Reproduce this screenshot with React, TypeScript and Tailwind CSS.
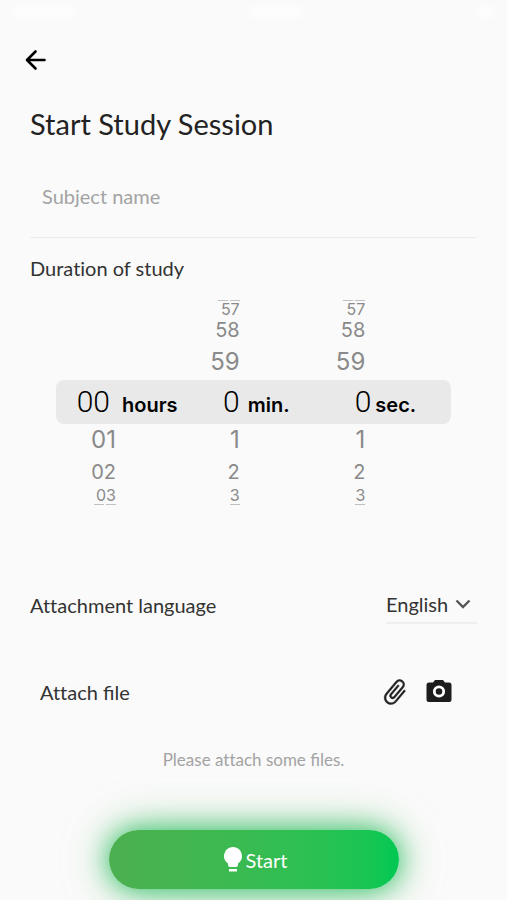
import { useState } from "react";

const pad = (n: number) => String(n).padStart(2, "0");

type Wheel = {
  unit: string;
  size: number;
  padded: boolean;
  wraps: boolean;
  rowWidth: string;
  valueWidth: string;
  labelGap: string;
};

const wheels: Wheel[] = [
  { unit: "hours", size: 24, padded: true, wraps: false, rowWidth: "w-15", valueWidth: "w-13.5", labelGap: "gap-3" },
  { unit: "min.", size: 60, padded: false, wraps: true, rowWidth: "w-13", valueWidth: "w-13", labelGap: "gap-2" },
  { unit: "sec.", size: 60, padded: false, wraps: true, rowWidth: "w-11.5", valueWidth: "w-13", labelGap: "gap-1" },
];

const rows = [
  { offset: -4, style: "h-1 items-center" },
  { offset: -3, style: "h-3.5 items-center text-base leading-3.5 text-[#8a8a8a]" },
  { offset: -2, style: "h-7 items-center text-xl leading-6 text-[#8a8a8a]" },
  { offset: -1, style: "h-9 items-center text-2xl leading-8 text-[#8a8a8a]" },
  { offset: 0, style: "h-11 items-center rounded-lg bg-[#e9e9e9] text-black" },
  { offset: 1, style: "h-8 items-center text-2xl leading-8 text-[#8a8a8a]" },
  { offset: 2, style: "h-8 items-center text-xl leading-6 text-[#8a8a8a]" },
  { offset: 3, style: "h-3.5 items-center text-base leading-3.5 text-[#8a8a8a]" },
  { offset: 4, style: "h-1 items-center" },
];

function DurationPicker() {
  const [values, setValues] = useState([0, 0, 0]);
  const select = (index: number, value: number) =>
    setValues(values.map((v, i) => (i === index ? value : v)));

  return (
    <div
      role="group"
      aria-labelledby="duration"
      className="mx-[26px] mt-4.5 font-['Inter','Liberation_Sans',sans-serif]"
    >
      {rows.map(({ offset, style }) => (
        <div key={offset} className={`grid grid-cols-3 ${style}`}>
          {wheels.map((w, i) => {
            const raw = values[i] + offset;
            const hidden = !w.wraps && (raw < 0 || raw >= w.size);
            if (hidden) return <span key={w.unit} />;
            const value = (raw + w.size) % w.size;
            const text = w.padded ? pad(value) : String(value);
            // The outermost value has turned edge-on, so only a thin line of it shows.
            if (Math.abs(offset) === 4)
              return (
                <span key={w.unit} aria-hidden="true" className={`flex justify-end gap-0.5 ${w.rowWidth}`}>
                  {text.split("").map((_, n) => (
                    <span key={n} className="h-px w-2.5 bg-[#c0c0c0]" />
                  ))}
                </span>
              );
            if (offset === 0)
              return (
                <div key={w.unit} className={`flex items-baseline ${w.labelGap}`}>
                  <output
                    className={`text-right font-['Roboto','Liberation_Sans',sans-serif] text-[30px] leading-9 font-light ${w.valueWidth}`}
                  >
                    {text}
                  </output>
                  <span className="text-xl font-semibold">{w.unit}</span>
                </div>
              );
            return (
              <button
                key={w.unit}
                type="button"
                onClick={() => select(i, value)}
                className={`text-right ${w.rowWidth}`}
              >
                {text}
              </button>
            );
          })}
        </div>
      ))}
    </div>
  );
}

export default function App() {
  return (
    <main className="flex min-h-screen flex-col overflow-hidden bg-[#fafafa] font-['Lato','Noto_Sans',sans-serif] text-xl leading-6 text-[#333] [font-variant-ligatures:none]">
      <div aria-hidden="true" className="flex h-6 items-center justify-between px-3">
        <span className="h-2 w-16 rounded-full bg-white blur-xs" />
        <span className="h-2 w-14 rounded-full bg-white blur-xs" />
        <span className="h-2 w-5 rounded-full bg-white blur-xs" />
      </div>

      <header className="px-5 pt-5">
        <button type="button" aria-label="Back" className="flex size-8 items-center justify-center text-black">
          <svg viewBox="0 0 24 24" className="size-6" fill="none" stroke="currentColor" strokeWidth="2.6" strokeLinecap="round" strokeLinejoin="round">
            <path d="M20.500 12H3M11.500 3.500L3 12l8.500 8.500" />
          </svg>
        </button>
      </header>

      <form className="flex grow flex-col px-[30px]" onSubmit={(e) => e.preventDefault()}>
        <h1 className="mt-7 text-[29px] leading-10 text-[#222]">Start Study Session</h1>

        <input
          type="text"
          aria-label="Subject name"
          placeholder="Subject name"
          className="mt-2.5 h-21 w-full border-b border-[#ececec] bg-transparent px-3 outline-none placeholder:text-[#a3a3a3]"
        />

        <h2 id="duration" className="mt-4.5">Duration of study</h2>
        <DurationPicker />

        <div className="mt-20 flex items-center justify-between">
          <label htmlFor="language">Attachment language</label>
          <div className="relative w-[91px] border-b-2 border-[#efefef]">
            <select id="language" className="h-9 w-full appearance-none bg-transparent outline-none">
              <option>English</option>
            </select>
            <svg viewBox="0 0 16 16" className="pointer-events-none absolute top-2.5 right-1.5 size-4" fill="none" stroke="#555" strokeWidth="2.4" aria-hidden="true">
              <path d="M1.500 4.500L8 11l6.500-6.500" />
            </svg>
          </div>
        </div>

        <div className="mt-13 flex items-center pr-6 pl-2.5">
          <span className="grow">
            Attach <span className="[font-variant-ligatures:normal]">file</span>
          </span>
          <button type="button" aria-label="Attach a file" className="flex size-8 items-center justify-center">
            <svg viewBox="0 0 24 24" className="size-[30px] rotate-40" fill="#222" stroke="#222" strokeWidth="0.3">
              <path d="M16.500 6v11.500c0 2.210-1.790 4-4 4s-4-1.790-4-4V5a2.500 2.500 0 0 1 5 0v10.500c0 .55-.45 1-1 1s-1-.45-1-1V6H10v9.500a2.500 2.500 0 0 0 5 0V5c0-2.210-1.790-4-4-4S7 2.790 7 5v12.500c0 3.040 2.460 5.500 5.500 5.500s5.500-2.460 5.500-5.500V6h-1.500z" />
            </svg>
          </button>
          <button type="button" aria-label="Take a photo" className="ml-3.5 flex size-7 items-center justify-center">
            <svg viewBox="0 0 28 28" className="size-7" fill="#1c1c1c">
              <path d="M10 2h8l2 2.500h4a2.500 2.500 0 0 1 2.500 2.500v14.500a2.500 2.500 0 0 1-2.500 2.500h-20a2.500 2.500 0 0 1-2.500-2.500v-14.500a2.500 2.500 0 0 1 2.500-2.500h4z" />
              <circle cx="14" cy="13.500" r="4.700" fill="none" stroke="#fff" strokeWidth="2.800" />
            </svg>
          </button>
        </div>

        <p className="mt-10 text-center text-[17px] leading-6 text-[#a3a3a3]">
          Please attach some <span className="[font-variant-ligatures:normal]">files.</span>
        </p>

        <button
          type="submit"
          className="mx-auto mt-auto mb-[11px] flex h-[59px] w-[290px] items-center justify-center gap-1 rounded-full bg-linear-to-r from-[#4caf50] to-[#00c853] pl-1 text-white shadow-[0_0_28px_#00b84acc,0_0_50px_#4caf5066]"
        >
          <svg viewBox="0 0 18 25" className="h-[25px] w-[18px]" fill="currentColor" aria-hidden="true">
            <path d="M9 0a9 9 0 0 0-5 16.400V18a2 2 0 0 0 2 2h6a2 2 0 0 0 2-2v-1.600A9 9 0 0 0 9 0zM5 22h8v2.500H5z" />
          </svg>
          Start
        </button>
      </form>
    </main>
  );
}
